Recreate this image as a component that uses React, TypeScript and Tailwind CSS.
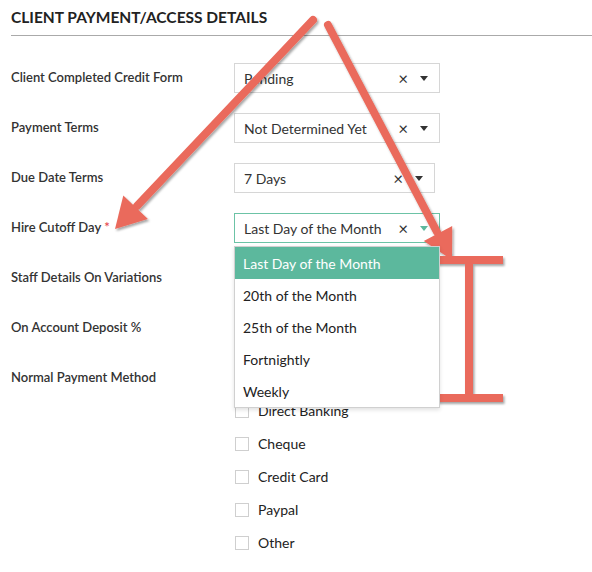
import React from "react";

const font = { fontFamily: "Lato, 'Open Sans', sans-serif" };

type SelectProps = {
  value: string;
  width?: string;
  active?: boolean;
};

function Select({ value, width = "w-[206px]", active = false }: SelectProps) {
  return (
    <div
      className={`flex h-[30px] ${width} items-center border bg-white pl-[9px] pr-[11px] text-[14px] text-[#333] ${
        active ? "border-[#6cc3a6]" : "border-[#d6d6d6]"
      }`}
    >
      <span className="flex-1 truncate">{value}</span>
      <span className="mr-[12px] text-[17px] leading-none text-[#333]">×</span>
      <svg width="8" height="5" viewBox="0 0 8 5">
        <path d="M0 0h8L4 5z" fill={active ? "#5cb89d" : "#333"} />
      </svg>
    </div>
  );
}

function Label({ text, required }: { text: string; required?: boolean }) {
  return (
    <div className="w-[223px] shrink-0 text-[13px] font-semibold text-[#333]">
      {text}
      {required ? <span className="ml-[3px] text-[#e5484d]">*</span> : null}
    </div>
  );
}

const options = [
  "Last Day of the Month",
  "20th of the Month",
  "25th of the Month",
  "Fortnightly",
  "Weekly",
];

const methods = ["Direct Banking", "Cheque", "Credit Card", "Paypal", "Other"];

function Annotations() {
  const red = "#ea6a5c";
  return (
    <svg
      className="pointer-events-none absolute left-0 top-0"
      width="592"
      height="572"
      viewBox="0 0 592 572"
    >
      <defs>
        <filter id="sh" x="-10%" y="-10%" width="120%" height="120%">
          <feDropShadow dx="1.5" dy="2" stdDeviation="1.2" floodColor="#000" floodOpacity="0.35" />
        </filter>
      </defs>
      <g filter="url(#sh)" fill={red} stroke={red}>
        <line x1="313" y1="20" x2="137" y2="206" strokeWidth="8" strokeLinecap="round" />
        <path d="M115 229 L147.9 218.9 L123.3 195.5 Z" stroke="none" />
        <line x1="328" y1="25" x2="437" y2="232" strokeWidth="8" strokeLinecap="round" />
        <path d="M452 260 L452.2 226 L423.8 241 Z" stroke="none" />
        <rect x="433" y="256" width="70" height="8" stroke="none" />
        <rect x="465" y="260" width="8" height="138" stroke="none" />
        <rect x="433" y="394" width="70" height="8" stroke="none" />
      </g>
    </svg>
  );
}

export default function App() {
  return (
    <div className="relative h-[572px] w-[592px] overflow-hidden bg-white" style={font}>
      <div className="pl-[11px]">
        <div className="flex h-[36px] items-start border-b border-[#aaa] pt-[6px] text-[15.5px] font-bold text-[#222]">
          CLIENT PAYMENT/ACCESS DETAILS
        </div>
        <div className="pt-[17px]">
          <div className="flex h-[50px] items-center">
            <Label text="Client Completed Credit Form" />
            <Select value="Pending" />
          </div>
          <div className="flex h-[50px] items-center">
            <Label text="Payment Terms" />
            <Select value="Not Determined Yet" />
          </div>
          <div className="flex h-[50px] items-center">
            <Label text="Due Date Terms" />
            <Select value="7 Days" width="w-[201px]" />
          </div>
          <div className="relative flex h-[50px] items-center">
            <Label text="Hire Cutoff Day" required />
            <div className="relative">
              <Select value="Last Day of the Month" active />
              <div className="absolute left-0 top-[33px] z-10 w-[206px] border border-[#d0d0d0] bg-white shadow-[0_2px_4px_rgba(0,0,0,0.12)]">
                {options.map((o, i) => (
                  <div
                    key={o}
                    className={`flex h-[32px] items-center px-[8px] text-[14px] ${
                      i === 0 ? "bg-[#5cb89d] text-white" : "text-[#222]"
                    }`}
                  >
                    {o}
                  </div>
                ))}
              </div>
            </div>
          </div>
          <div className="flex h-[50px] items-center">
            <Label text="Staff Details On Variations" />
          </div>
          <div className="flex h-[50px] items-center">
            <Label text="On Account Deposit %" />
          </div>
          <div className="flex items-start pt-[8px]">
            <div className="flex h-[33px] items-center">
              <Label text="Normal Payment Method" />
            </div>
            <div className="flex flex-col pt-[33px]">
              {methods.map((m) => (
                <label key={m} className="flex h-[33px] items-center gap-[9px] text-[14px] text-[#222]">
                  <span className="ml-[1px] h-[14px] w-[14px] border border-[#cfcfcf] bg-white" />
                  {m}
                </label>
              ))}
            </div>
          </div>
        </div>
      </div>
      <Annotations />
    </div>
  );
}
